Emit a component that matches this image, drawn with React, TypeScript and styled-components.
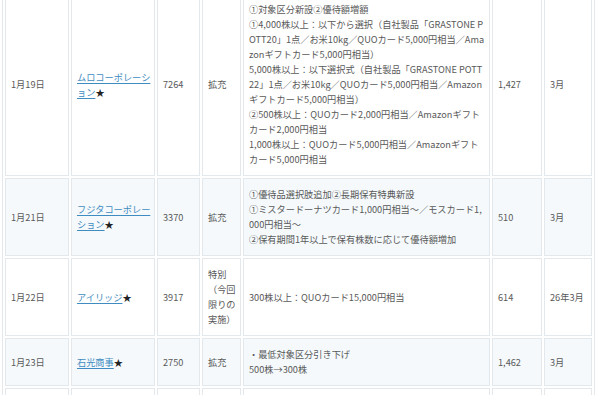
import React from "react";
import styled, { createGlobalStyle } from "styled-components";

const Global = createGlobalStyle`
  * { box-sizing: border-box; }
  html, body { margin: 0; padding: 0; background: #ffffff; }
  body {
    font-family: "Noto Sans CJK JP", "Noto Sans", sans-serif;
    color: #595959;
  }
`;

const Page = styled.div`
  width: 600px;
  overflow: hidden;
`;

const Table = styled.table`
  width: 593px;
  margin: -10px 0 0 2px;
  table-layout: fixed;
  border-collapse: separate;
  border-spacing: 2px;
  border: 1px solid #e3e8ed;
  font-size: 9.2px;
  line-height: 15px;
  font-feature-settings: "pkna";
  word-break: break-all;
`;

const Col = styled.col<{ $w: number }>`
  width: ${(p) => p.$w}px;
`;

const Row = styled.tr<{ $alt?: boolean }>`
  & > td {
    background: ${(p) => (p.$alt ? "#f5f9fc" : "#ffffff")};
  }
`;

const Cell = styled.td`
  border: 1px solid #e3e8ed;
  padding: 8px 3px 8px 5px;
  vertical-align: middle;
  text-align: left;
`;

const Company = styled.a`
  color: #3f8cc0;
  text-decoration: underline;
  text-underline-offset: 2px;
`;

const Star = styled.span`
  color: #222222;
`;

const Line = styled.div``;

type RowData = {
  date: string;
  name: string;
  code: string;
  kind: string;
  lines: string[];
  price: string;
  month: string;
};

const rows: RowData[] = [
  {
    date: "1月19日",
    name: "ムロコーポレーション",
    code: "7264",
    kind: "拡充",
    lines: [
      "①対象区分新設②優待額増額",
      "①4,000株以上：以下から選択（自社製品「GRASTONE POTT20」1点／お米10kg／QUOカード5,000円相当／Amazonギフトカード5,000円相当）",
      "5,000株以上：以下選択式（自社製品「GRASTONE POTT22」1点／お米10kg／QUOカード5,000円相当／Amazonギフトカード5,000円相当）",
      "②500株以上：QUOカード2,000円相当／Amazonギフトカード2,000円相当",
      "1,000株以上：QUOカード5,000円相当／Amazonギフトカード5,000円相当",
    ],
    price: "1,427",
    month: "3月",
  },
  {
    date: "1月21日",
    name: "フジタコーポレーション",
    code: "3370",
    kind: "拡充",
    lines: [
      "①優待品選択肢追加②長期保有特典新設",
      "①ミスタードーナツカード1,000円相当～／モスカード1,000円相当～",
      "②保有期間1年以上で保有株数に応じて優待額増加",
    ],
    price: "510",
    month: "3月",
  },
  {
    date: "1月22日",
    name: "アイリッジ",
    code: "3917",
    kind: "特別（今回限りの実施）",
    lines: ["300株以上：QUOカード15,000円相当"],
    price: "614",
    month: "26年3月",
  },
  {
    date: "1月23日",
    name: "石光商事",
    code: "2750",
    kind: "拡充",
    lines: ["・最低対象区分引き下げ", "500株→300株"],
    price: "1,462",
    month: "3月",
  },
  {
    date: "1月26日",
    name: "ヨシタケ",
    code: "6488",
    kind: "拡充",
    lines: ["100株以上：QUOカード1,000円相当", "保有期間に応じて増額"],
    price: "1,035",
    month: "3月",
  },
];

const widths = [64, 84, 43, 39, 247, 50, 48];

export default function App() {
  return (
    <Page>
      <Global />
      <Table>
        <colgroup>
          {widths.map((w, i) => (
            <Col key={i} $w={w} />
          ))}
        </colgroup>
        <tbody>
          {rows.map((r, i) => (
            <Row key={r.date} $alt={i % 2 === 1}>
              <Cell>{r.date}</Cell>
              <Cell>
                <Company href="#">{r.name}</Company>
                <Star>★</Star>
              </Cell>
              <Cell>{r.code}</Cell>
              <Cell>{r.kind}</Cell>
              <Cell>
                {r.lines.map((l, j) => (
                  <Line key={j}>{l}</Line>
                ))}
              </Cell>
              <Cell>{r.price}</Cell>
              <Cell>{r.month}</Cell>
            </Row>
          ))}
        </tbody>
      </Table>
    </Page>
  );
}
